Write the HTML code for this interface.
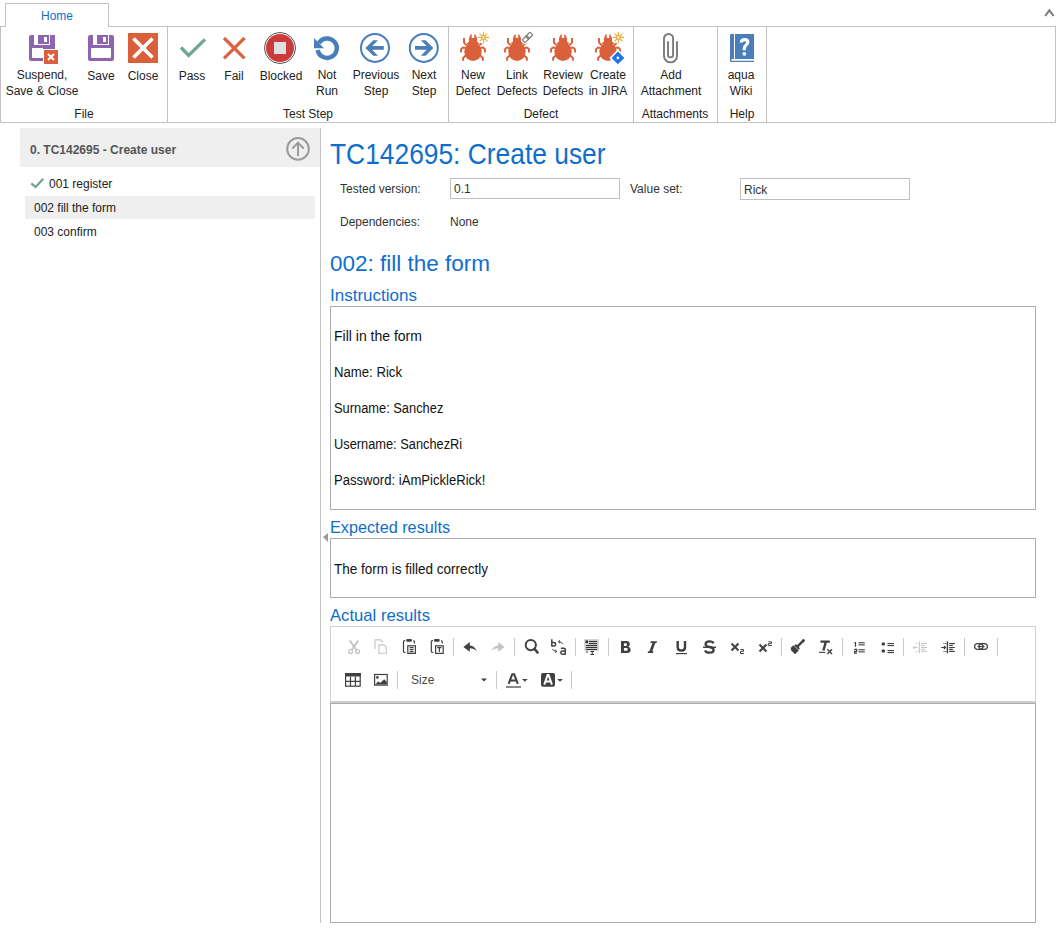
<!DOCTYPE html>
<html><head><meta charset="utf-8">
<style>
html,body{margin:0;padding:0;}
body{width:1056px;height:928px;overflow:hidden;position:relative;background:#fff;font-family:"Liberation Sans",sans-serif;color:#222;}
.a{position:absolute;}
.t{position:absolute;white-space:nowrap;font-size:12px;line-height:16px;}
.c{text-align:center;width:120px;}
.ln{position:absolute;background:#c2c2c2;}
</style></head><body>

<!-- ribbon -->
<div class="a" style="left:0;top:26px;width:1054px;height:95px;border:1px solid #c2c2c2;"></div>
<div class="a" style="left:5px;top:3px;width:102px;height:23px;border:1px solid #c2c2c2;border-bottom:none;background:#fff;"></div>
<div class="t" style="left:41px;top:8px;color:#0f6ecd;">Home</div>
<div class="ln" style="left:167px;top:27px;width:1px;height:95px;"></div>
<div class="ln" style="left:448px;top:27px;width:1px;height:95px;"></div>
<div class="ln" style="left:633px;top:27px;width:1px;height:95px;"></div>
<div class="ln" style="left:717px;top:27px;width:1px;height:95px;"></div>
<div class="ln" style="left:766px;top:27px;width:1px;height:95px;"></div>

<div id="rlabels">
<div class="t c" style="left:-18px;top:67px;">Suspend,<br>Save &amp; Close</div>
<div class="t c" style="left:41px;top:68px;">Save</div>
<div class="t c" style="left:83px;top:68px;">Close</div>
<div class="t c" style="left:132px;top:68px;">Pass</div>
<div class="t c" style="left:174px;top:68px;">Fail</div>
<div class="t c" style="left:221px;top:68px;">Blocked</div>
<div class="t c" style="left:267px;top:67px;">Not<br>Run</div>
<div class="t c" style="left:316px;top:67px;">Previous<br>Step</div>
<div class="t c" style="left:364px;top:67px;">Next<br>Step</div>
<div class="t c" style="left:413px;top:67px;">New<br>Defect</div>
<div class="t c" style="left:457px;top:67px;">Link<br>Defects</div>
<div class="t c" style="left:503px;top:67px;">Review<br>Defects</div>
<div class="t c" style="left:548px;top:67px;">Create<br>in JIRA</div>
<div class="t c" style="left:611px;top:67px;">Add<br>Attachment</div>
<div class="t c" style="left:681px;top:67px;">aqua<br>Wiki</div>
<div class="t c" style="left:24px;top:106px;">File</div>
<div class="t c" style="left:248px;top:106px;">Test Step</div>
<div class="t c" style="left:481px;top:106px;">Defect</div>
<div class="t c" style="left:615px;top:106px;">Attachments</div>
<div class="t c" style="left:682px;top:106px;">Help</div>
</div>

<!-- left tree -->
<div class="a" style="left:20px;top:128px;width:300px;height:39px;background:#efefef;"></div>
<div class="t" style="left:30px;top:142px;font-weight:bold;color:#555;">0. TC142695 - Create user</div>
<div class="a" style="left:25px;top:196px;width:290px;height:23px;background:#efefef;"></div>
<div class="t" style="left:49px;top:176px;">001 register</div>
<div class="t" style="left:34px;top:200px;">002 fill the form</div>
<div class="t" style="left:34px;top:224px;">003 confirm</div>
<div class="ln" style="left:320px;top:128px;width:1px;height:795px;background:#c2c2c2;"></div>

<!-- content -->
<div class="t" style="left:330px;top:138px;font-size:28.6px;line-height:32px;color:#0f6ecd;transform:scaleX(0.922);transform-origin:0 0;">TC142695: Create user</div>
<div class="t" style="left:340px;top:181px;color:#333;">Tested version:</div>
<div class="a" style="left:450px;top:178px;width:168px;height:19px;border:1px solid #c0c0c0;"></div>
<div class="t" style="left:454px;top:181px;color:#333;">0.1</div>
<div class="t" style="left:630px;top:181px;color:#333;">Value set:</div>
<div class="a" style="left:740px;top:178px;width:168px;height:20px;border:1px solid #c0c0c0;"></div>
<div class="t" style="left:744px;top:182px;color:#333;">Rick</div>
<div class="t" style="left:340px;top:214px;color:#333;">Dependencies:</div>
<div class="t" style="left:450px;top:214px;color:#333;">None</div>

<div class="t" style="left:330px;top:251px;font-size:22.5px;line-height:26px;color:#0f6ecd;">002: fill the form</div>
<div class="t" style="left:330px;top:286px;font-size:17px;line-height:20px;color:#0f6ecd;">Instructions</div>
<div class="a" style="left:330px;top:306px;width:704px;height:202px;border:1px solid #a9acb4;"></div>
<div class="t" style="left:334px;top:328px;font-size:14px;color:#111;">Fill in the form</div>
<div class="t" style="left:334px;top:364px;font-size:14px;color:#111;transform:scaleX(0.94);transform-origin:0 0;">Name: Rick</div>
<div class="t" style="left:334px;top:400px;font-size:14px;color:#111;transform:scaleX(0.918);transform-origin:0 0;">Surname: Sanchez</div>
<div class="t" style="left:334px;top:436px;font-size:14px;color:#111;transform:scaleX(0.915);transform-origin:0 0;">Username: SanchezRi</div>
<div class="t" style="left:334px;top:472px;font-size:14px;color:#111;transform:scaleX(0.935);transform-origin:0 0;">Password: iAmPickleRick!</div>

<div class="t" style="left:330px;top:518px;font-size:17px;line-height:20px;color:#0f6ecd;transform:scaleX(0.955);transform-origin:0 0;">Expected results</div>
<div class="a" style="left:330px;top:538px;width:704px;height:58px;border:1px solid #a9acb4;"></div>
<div class="t" style="left:334px;top:561px;font-size:14px;color:#111;transform:scaleX(0.965);transform-origin:0 0;">The form is filled correctly</div>

<div class="t" style="left:330px;top:606px;font-size:17px;line-height:20px;color:#0f6ecd;transform:scaleX(0.98);transform-origin:0 0;">Actual results</div>
<div class="a" style="left:330px;top:626px;width:704px;height:76px;border:1px solid #d1d1d1;border-bottom:none;"></div>
<div class="a" style="left:331px;top:701px;width:704px;height:2px;background:#cdcdcd;"></div>
<div class="a" style="left:330px;top:703px;width:704px;height:218px;border:1px solid #a9acb4;"></div>

<div class="t" style="left:411px;top:672px;font-size:12px;color:#484848;">Size</div>
<svg class="a" style="left:0;top:0;" width="1056" height="928" viewBox="0 0 1056 928">
<polygon points="323,537 328,533 328,542" fill="#9a9a9a"/>
<!-- caret -->
<polyline points="1045.2,16 1049.4,10.3 1053.6,16" fill="none" stroke="#7d7d7d" stroke-width="2.1"/>
<!-- suspend floppy -->
<g fill="#8e64b0">
<path fill-rule="evenodd" d="M31,35 H55 V49 H43 V61 H31 Q29,61 29,59 V37 Q29,35 31,35 Z M34,35 V45 H50 V35 Z M32,48 V57 Q32,58 33,58 H43 V48 Z"/>
<path fill-rule="evenodd" d="M38,35 H49 V44 H38 Z M44,37 V42 H47 V37 Z"/>
</g>
<rect x="44" y="50" width="14" height="14" fill="#d9603b"/>
<g stroke="#fff" stroke-width="2"><line x1="48" y1="54" x2="54" y2="60"/><line x1="54" y1="54" x2="48" y2="60"/></g>
<!-- save floppy -->
<g fill="#8e64b0">
<path fill-rule="evenodd" d="M90,35 H112 Q114,35 114,37 V59 Q114,61 112,61 H90 Q88,61 88,59 V37 Q88,35 90,35 Z M93,35 V45 H109 V35 Z M92,48 Q91,48 91,49 V57 Q91,58 92,58 H110 Q111,58 111,57 V49 Q111,48 110,48 Z"/>
<path fill-rule="evenodd" d="M97,35 H108 V44 H97 Z M103,37 V42 H106 V37 Z"/>
</g>
<!-- close -->
<rect x="128" y="33" width="30" height="30" fill="#d9603b"/>
<g stroke="#fff" stroke-width="3.6"><line x1="133.5" y1="38.5" x2="152.5" y2="57.5"/><line x1="152.5" y1="38.5" x2="133.5" y2="57.5"/></g>
<!-- pass -->
<polyline points="181,47.5 188.6,55.5 205,39.3" fill="none" stroke="#6fa794" stroke-width="3.3"/>
<!-- fail -->
<g stroke="#d9643f" stroke-width="3.2"><line x1="224" y1="38" x2="244.5" y2="58.3"/><line x1="244.5" y1="38" x2="224" y2="58.3"/></g>
<!-- blocked -->
<circle cx="280" cy="48" r="15.5" fill="#fff" stroke="#505050" stroke-width="1"/>
<circle cx="280" cy="48" r="14" fill="#cc3b3b"/>
<rect x="274" y="42" width="12" height="12" fill="#dedede"/>
<!-- not run -->
<path d="M317.6,50 A9.7,9.7 0 1 0 318.8,43.2" fill="none" stroke="#4a7ebb" stroke-width="4.4"/>
<polygon points="314,38 314,48.3 324,48.3" fill="#4a7ebb"/>
<!-- previous / next -->
<g id="prev">
<circle cx="375" cy="47.9" r="14" fill="none" stroke="#4a7ebb" stroke-width="2"/>
<polygon points="365.4,48 373.3,40.2 378,40.2 372.1,46.1 383.8,46.1 383.8,49.8 372.1,49.8 378,55.8 373.3,55.8" fill="#4a7ebb"/>
</g>
<g transform="translate(798.8,0) scale(-1,1)">
<circle cx="375" cy="47.9" r="14" fill="none" stroke="#4a7ebb" stroke-width="2"/>
<polygon points="365.4,48 373.3,40.2 378,40.2 372.1,46.1 383.8,46.1 383.8,49.8 372.1,49.8 378,55.8 373.3,55.8" fill="#4a7ebb"/>
</g>
<!-- bugs -->
<g transform="translate(473,0)" fill="#d9603b" stroke="none">
<ellipse cx="0" cy="51.6" rx="8.7" ry="9.3"/>
<path d="M-6.5,44 C-5,41.5 -3,41 0,41 C3,41 5,41.5 6.5,44 Z"/>
<path d="M-4,42 C-4.6,38 -3.2,35.3 -1.3,33.8 L-1.3,38 L1.3,38 L1.3,33.8 C3.2,35.3 4.6,38 4,42 Z"/>
<g fill="none" stroke="#d9603b" stroke-width="1.9">
<polyline points="-9,38 -9,42.6 -6.3,45.3"/><polyline points="9,38 9,42.6 6.3,45.3"/>
<polyline points="-7.5,47.8 -10.5,47.8 -12,49.3 -12,52.6"/><polyline points="7.5,47.8 10.5,47.8 12,49.3 12,52.6"/>
<polyline points="-7,55.2 -9.9,58 -9.9,60.8"/><polyline points="7,55.2 9.9,58 9.9,60.8"/>
</g></g>
<g transform="translate(517,0)" fill="#d9603b" stroke="none">
<ellipse cx="0" cy="51.6" rx="8.7" ry="9.3"/>
<path d="M-6.5,44 C-5,41.5 -3,41 0,41 C3,41 5,41.5 6.5,44 Z"/>
<path d="M-4,42 C-4.6,38 -3.2,35.3 -1.3,33.8 L-1.3,38 L1.3,38 L1.3,33.8 C3.2,35.3 4.6,38 4,42 Z"/>
<g fill="none" stroke="#d9603b" stroke-width="1.9">
<polyline points="-9,38 -9,42.6 -6.3,45.3"/><polyline points="9,38 9,42.6 6.3,45.3"/>
<polyline points="-7.5,47.8 -10.5,47.8 -12,49.3 -12,52.6"/><polyline points="7.5,47.8 10.5,47.8 12,49.3 12,52.6"/>
<polyline points="-7,55.2 -9.9,58 -9.9,60.8"/><polyline points="7,55.2 9.9,58 9.9,60.8"/>
</g></g>
<g transform="translate(563,0)" fill="#d9603b" stroke="none">
<ellipse cx="0" cy="51.6" rx="8.7" ry="9.3"/>
<path d="M-6.5,44 C-5,41.5 -3,41 0,41 C3,41 5,41.5 6.5,44 Z"/>
<path d="M-4,42 C-4.6,38 -3.2,35.3 -1.3,33.8 L-1.3,38 L1.3,38 L1.3,33.8 C3.2,35.3 4.6,38 4,42 Z"/>
<g fill="none" stroke="#d9603b" stroke-width="1.9">
<polyline points="-9,38 -9,42.6 -6.3,45.3"/><polyline points="9,38 9,42.6 6.3,45.3"/>
<polyline points="-7.5,47.8 -10.5,47.8 -12,49.3 -12,52.6"/><polyline points="7.5,47.8 10.5,47.8 12,49.3 12,52.6"/>
<polyline points="-7,55.2 -9.9,58 -9.9,60.8"/><polyline points="7,55.2 9.9,58 9.9,60.8"/>
</g></g>
<g transform="translate(608,0)" fill="#d9603b" stroke="none">
<ellipse cx="0" cy="51.6" rx="8.7" ry="9.3"/>
<path d="M-6.5,44 C-5,41.5 -3,41 0,41 C3,41 5,41.5 6.5,44 Z"/>
<path d="M-4,42 C-4.6,38 -3.2,35.3 -1.3,33.8 L-1.3,38 L1.3,38 L1.3,33.8 C3.2,35.3 4.6,38 4,42 Z"/>
<g fill="none" stroke="#d9603b" stroke-width="1.9">
<polyline points="-9,38 -9,42.6 -6.3,45.3"/><polyline points="9,38 9,42.6 6.3,45.3"/>
<polyline points="-7.5,47.8 -10.5,47.8 -12,49.3 -12,52.6"/><polyline points="7.5,47.8 10.5,47.8 12,49.3 12,52.6"/>
<polyline points="-7,55.2 -9.9,58 -9.9,60.8"/><polyline points="7,55.2 9.9,58 9.9,60.8"/>
</g></g>
<g transform="translate(483.5,37.4)">
<circle r="6" fill="#fff"/>
<g stroke="#e9ad3c" stroke-width="1.1" stroke-linecap="round">
<line x1="0" y1="-5.3" x2="0" y2="5.3"/><line x1="-5.3" y1="0" x2="5.3" y2="0"/>
<line x1="-3.6" y1="-3.6" x2="3.6" y2="3.6"/><line x1="-3.6" y1="3.6" x2="3.6" y2="-3.6"/>
</g><circle r="2.3" fill="#e9ad3c"/><circle r="1.1" fill="#fff"/></g>
<g transform="translate(618.4,37.4)">
<circle r="6" fill="#fff"/>
<g stroke="#e9ad3c" stroke-width="1.1" stroke-linecap="round">
<line x1="0" y1="-5.3" x2="0" y2="5.3"/><line x1="-5.3" y1="0" x2="5.3" y2="0"/>
<line x1="-3.6" y1="-3.6" x2="3.6" y2="3.6"/><line x1="-3.6" y1="3.6" x2="3.6" y2="-3.6"/>
</g><circle r="2.3" fill="#e9ad3c"/><circle r="1.1" fill="#fff"/></g>
<g transform="translate(527.5,37.4) rotate(-45)">
<rect x="-6.8" y="-3.3" width="13.6" height="6.6" rx="1.5" fill="#fff"/>
<rect x="-5.5" y="-2" width="5.9" height="4" rx="0.8" fill="none" stroke="#777" stroke-width="1.2"/>
<rect x="-0.4" y="-2" width="5.9" height="4" rx="0.8" fill="none" stroke="#777" stroke-width="1.2"/>
<rect x="-1.3" y="-1" width="2.6" height="2" fill="#888"/>
</g>
<g transform="translate(617.9,57.9) rotate(45)">
<rect x="-5.3" y="-5.3" width="10.6" height="10.6" fill="#fff" stroke="#fff" stroke-width="1.6"/>
<rect x="-4.5" y="-4.5" width="9" height="9" fill="#1f74e8"/>
</g>
<circle cx="617.9" cy="57.9" r="1.4" fill="#fff"/>
<!-- paperclip -->
<path d="M668,41.3 V54.8 A2.55,2.55 0 0 0 673.1,54.8 V38.5 A4.55,4.55 0 0 0 664,38.5 V55.9 A6.5,6.5 0 0 0 677,55.9 V41.3" fill="none" stroke="#7a7a7a" stroke-width="1.9"/>
<!-- help book -->
<path d="M730,35.2 Q730,34 731.2,34 H734 V59 H732.2 Q731.3,59 731.3,59.9 Q731.3,60.8 732.2,60.8 H754 V62 H731.3 Q730,62 730,60.7 Z" fill="#4a7ebb"/>
<rect x="735" y="34" width="19" height="25" fill="#4a7ebb"/>
<path d="M741.4,42.6 C741.4,40.5 742.8,39.6 744.6,39.6 C746.6,39.6 747.8,40.7 747.8,42.3 C747.8,44.6 744.3,45.2 744.3,48.3 V50.2" fill="none" stroke="#fff" stroke-width="3.2"/>
<circle cx="744.3" cy="53.8" r="1.9" fill="#fff"/>
<!-- tree header arrow -->
<circle cx="298" cy="148.9" r="10.8" fill="none" stroke="#9b9b9b" stroke-width="2"/>
<line x1="298" y1="142.5" x2="298" y2="156" stroke="#9b9b9b" stroke-width="2"/>
<polyline points="292.3,148.5 298,142.6 303.7,148.5" fill="none" stroke="#9b9b9b" stroke-width="2"/>
<!-- tree check -->
<polyline points="31.3,183.3 35.6,187 43.3,178.8" fill="none" stroke="#6fa794" stroke-width="2.3"/>
<!-- editor toolbar -->
<g fill="#c9c9c9">
<rect x="453" y="638" width="1" height="18"/><rect x="514" y="638" width="1" height="18"/><rect x="575" y="638" width="1" height="18"/>
<rect x="608" y="638" width="1" height="18"/><rect x="781" y="638" width="1" height="18"/><rect x="842" y="638" width="1" height="18"/>
<rect x="903" y="638" width="1" height="18"/><rect x="964" y="638" width="1" height="18"/><rect x="997" y="638" width="1" height="18"/>
<rect x="397" y="671" width="1" height="18"/><rect x="496" y="671" width="1" height="18"/><rect x="571" y="671" width="1" height="18"/>
</g>
<!-- cut -->
<g stroke="#c4c4c4" fill="none">
<path d="M349.8,640.5 L356.3,649.8 M358.3,640.5 L351.8,649.8" stroke-width="1.9"/>
<circle cx="350.6" cy="651.6" r="1.9" stroke-width="1.3"/><circle cx="357.5" cy="651.6" r="1.9" stroke-width="1.3"/>
</g>
<!-- copy -->
<g stroke="#c4c4c4" fill="none" stroke-width="1.1">
<path d="M376,648.3 H375 V639.9 H380.7 L383,642.4"/>
<path d="M378.9,644.9 H384 L386.3,647.3 V653.2 H378.9 Z"/>
</g>
<!-- paste + paste text -->
<g id="paste" stroke="#404040" fill="none" stroke-width="1.2">
<path d="M405.2,640.6 H404.6 Q403.5,640.6 403.5,641.8 V651.2 Q403.5,652.4 404.6,652.4 H405.5"/>
<path d="M413.3,640.6 Q414.4,640.6 414.4,641.8 V643.6"/>
<rect x="407.8" y="645.8" width="7.6" height="7.6"/>
<path d="M409.7,647.6 H413.5 M409.7,649.6 H413.5 M409.7,651.6 H413.5"/>
</g>
<rect x="406.3" y="639" width="5.5" height="2.8" rx="0.8" fill="#404040"/>
<g stroke="#404040" fill="none" stroke-width="1.2">
<path d="M433,640.6 H432.4 Q431.3,640.6 431.3,641.8 V651.2 Q431.3,652.4 432.4,652.4 H433.3"/>
<path d="M441.1,640.6 Q442.2,640.6 442.2,641.8 V643.6"/>
<rect x="435.6" y="645.8" width="7.6" height="7.6"/>
<path d="M437.3,647.6 H441.5 M439.4,647.6 V652"/>
</g>
<rect x="434.1" y="639" width="5.5" height="2.8" rx="0.8" fill="#404040"/>
<!-- undo redo -->
<path d="M463.4,646.9 L469.8,642 V645.5 Q474.5,645.5 477,651.5 Q474,648.3 469.8,648.3 V651.8 Z" fill="#404040"/>
<path d="M504.6,646.9 L498.2,642 V645.5 Q493.5,645.5 491,651.5 Q494,648.3 498.2,648.3 V651.8 Z" fill="#c4c4c4"/>
<!-- find -->
<circle cx="530.8" cy="645.1" r="5.1" fill="none" stroke="#404040" stroke-width="2"/>
<line x1="534.5" y1="648.8" x2="537.5" y2="652.5" stroke="#404040" stroke-width="2.6" stroke-linecap="round"/>
<!-- replace -->
<g fill="none" stroke="#404040" stroke-width="1.5">
<path d="M551.8,639.2 V646.4 M551.8,642.5 H554 Q555.5,642.5 555.5,644 V644.8 Q555.5,646.1 554,646.1 H551.8"/>
<path d="M560.9,648.2 H563.8 Q565.3,648.2 565.3,649.6 V654.8 M565.3,651 H562.3 Q560.8,651 560.8,652.5 V652.8 Q560.8,654.2 562.3,654.2 H565.3"/>
</g>
<g fill="none" stroke="#404040" stroke-width="1">
<path d="M560,640.3 L558.4,641.7 L560,643.1 M558.6,641.7 Q561.8,641.7 562.8,644.2"/>
<path d="M555.2,649.9 L556.8,651.3 L555.2,652.7 M556.6,651.3 Q553.3,651.3 552.3,648.8"/>
</g>
<!-- select all / form -->
<rect x="584.3" y="639.2" width="14.5" height="11.5" fill="#cbcbcb"/>
<g stroke="#333" stroke-width="1">
<path d="M589,641.5 H597 M589,643.5 H597 M586,645.5 H597 M586,647.5 H597 M586,649.5 H597"/>
<path d="M586,652 H588 M590.5,651.5 H594 M592.2,651.5 V654.5 M590.5,654.5 H594"/>
</g>
<rect x="585.5" y="640.5" width="2.5" height="2.5" fill="#333"/>
<!-- B I U S x2 x2 -->
<path fill-rule="evenodd" fill="#404040" d="M621,641 H626.3 Q629.8,641 629.8,644 Q629.8,646 628.2,646.7 Q630.7,647.4 630.7,649.8 Q630.7,653 626.8,653 H621 Z M623.9,643.2 V645.9 H625.9 Q627,645.9 627,644.5 Q627,643.2 625.9,643.2 Z M623.9,648 V650.8 H626.3 Q627.8,650.8 627.8,649.4 Q627.8,648 626.3,648 Z"/>
<path d="M650.8,641.2 H657 L656.5,642.9 H655.3 L652.3,651.2 H653.5 L653,652.9 H647.6 L648.1,651.2 H649.4 L652.4,642.9 H650.3 Z" fill="#404040"/>
<path d="M677.7,641 V647.3 Q677.7,650.6 681.35,650.6 Q685,650.6 685,647.3 V641" fill="none" stroke="#404040" stroke-width="2.4"/>
<rect x="676" y="653" width="11" height="1.2" fill="#404040"/>
<path d="M713.6,643.3 C713,641.8 711.5,641.3 709.5,641.3 C707.2,641.3 705.6,642.4 705.6,644.2 C705.6,646 707.2,646.6 709.5,647 C712,647.4 713.6,648 713.6,650 C713.6,651.8 712,652.7 709.5,652.7 C707.3,652.7 705.7,652 705,650.5" fill="none" stroke="#404040" stroke-width="2.3"/>
<rect x="703" y="646.6" width="13" height="1.4" fill="#404040"/>
<g stroke="#404040" stroke-width="2"><path d="M731.5,643.5 L738.5,650.5 M738.5,643.5 L731.5,650.5"/><path d="M759.5,644.5 L766.5,651.5 M766.5,644.5 L759.5,651.5"/></g>
<path d="M740.5,649.5 H743.5 V651.3 H740.5 V653.5 H743.8" fill="none" stroke="#404040" stroke-width="1"/>
<path d="M768.3,641.8 H771.5 V643.6 H768.3 V645.5 H771.8" fill="none" stroke="#404040" stroke-width="1"/>
<!-- brush -->
<g transform="translate(797,647) rotate(45)" fill="#404040">
<rect x="-1.2" y="-9" width="2.4" height="8.5"/><circle cx="0" cy="-9" r="1.5"/>
<rect x="-3" y="-1.2" width="6" height="2"/>
<path d="M-3.8,1.3 H3.8 V6.5 H-2 L-3.8,5 Z"/>
</g>
<!-- Tx -->
<path d="M820.5,641.6 H829.8 M826,641.3 L823.4,650.5" stroke="#404040" stroke-width="2.4" fill="none"/>
<rect x="819" y="651.8" width="6.3" height="1.1" fill="#404040"/>
<path d="M827.3,649.3 L832,654 M832,649.3 L827.3,654" stroke="#404040" stroke-width="1.4"/>
<!-- lists -->
<g stroke="#404040" stroke-width="1.2" fill="none">
<path d="M854.3,643 L855.5,642.6 V646.8"/>
<path d="M854.2,649.4 H856.7 V651.3 H854.6 V653.2 H857"/>
</g>
<g fill="#404040">
<rect x="858.5" y="642.2" width="6.3" height="1.1"/><rect x="858.5" y="644.3" width="6.3" height="1.1"/>
<rect x="858.5" y="649.2" width="6.3" height="1.1"/><rect x="858.5" y="651.3" width="6.3" height="1.1"/>
<rect x="887.5" y="643" width="6.5" height="1.1"/><rect x="887.5" y="645" width="6.5" height="1.1"/>
<rect x="887.5" y="650" width="6.5" height="1.1"/><rect x="887.5" y="652" width="6.5" height="1.1"/>
</g>
<circle cx="883.3" cy="644" r="1.8" fill="#404040"/><circle cx="883.3" cy="651" r="1.8" fill="#404040"/>
<!-- outdent / indent -->
<g stroke="#c4c4c4" stroke-width="1" fill="none">
<path d="M919.4,641.3 V653.4"/>
<path d="M921,643.6 H927 M921,645.5 H925 M921,647.5 H927 M921,649.4 H925 M921,651.4 H927"/>
<path d="M913.2,647.5 H917.6 M915,645.8 L913.3,647.5 L915,649.2"/>
<path d="M915.5,643.5 H916.5 M917.5,643.5 H918.5 M915.5,651.5 H916.5 M917.5,651.5 H918.5"/>
</g>
<g stroke="#404040" stroke-width="1.1" fill="none">
<path d="M947.4,641.3 V653.4" stroke-width="1.4"/>
<path d="M949.2,643.6 H954.8 M949.2,645.5 H952.8 M949.2,647.5 H954.8 M949.2,649.4 H952.8 M949.2,651.4 H954.8"/>
<path d="M941.2,647.5 H945.6 M943.9,645.8 L945.6,647.5 L943.9,649.2"/>
<path d="M943.5,643.5 H944.5 M945.2,643.5 H946.2 M943.5,651.5 H944.5 M945.2,651.5 H946.2"/>
</g>
<!-- link -->
<g stroke="#404040" stroke-width="1.2" fill="none">
<rect x="974.6" y="643.6" width="8.4" height="5.8" rx="2.9"/>
<rect x="979" y="643.6" width="8.4" height="5.8" rx="2.9"/>
<path d="M977.5,646.5 H984.5"/>
</g>
<!-- row 2: table, image -->
<g stroke="#404040" stroke-width="1.2" fill="none">
<rect x="345.6" y="673.6" width="14.6" height="12.6"/>
<path d="M350.5,676.5 V686 M355.4,676.5 V686 M345.6,681.4 H360.2"/>
</g>
<rect x="345" y="673" width="15.8" height="3.5" fill="#404040"/>
<rect x="374.6" y="674.5" width="12.6" height="10.6" fill="none" stroke="#404040" stroke-width="1.2"/>
<circle cx="377.4" cy="677.4" r="1.3" fill="#404040"/>
<path d="M375.2,684.6 L378.4,681.2 L380,683 L384.3,679.2 L386.6,682 V684.6 Z" fill="#404040"/>
<!-- size combo -->
<polygon points="481,678.6 487,678.6 484,681.5" fill="#404040"/>
<!-- text color / bg color -->
<path d="M508.6,683.8 L512.2,674.3 H514.2 L517.8,683.8 M510,680.5 H516.4" fill="none" stroke="#404040" stroke-width="2"/>
<rect x="506" y="686" width="15" height="2" fill="#888"/>
<polygon points="522,679 527.7,679 524.85,681.8" fill="#404040"/>
<rect x="541" y="673" width="14" height="13.8" rx="2" fill="#404040"/>
<path d="M544.3,684.6 L547.6,675 H548.6 L551.9,684.6 M545.5,681.5 H550.7" fill="none" stroke="#fff" stroke-width="2"/>
<polygon points="557.2,679 562.9,679 560,681.8" fill="#404040"/>
</svg>

</body></html>
